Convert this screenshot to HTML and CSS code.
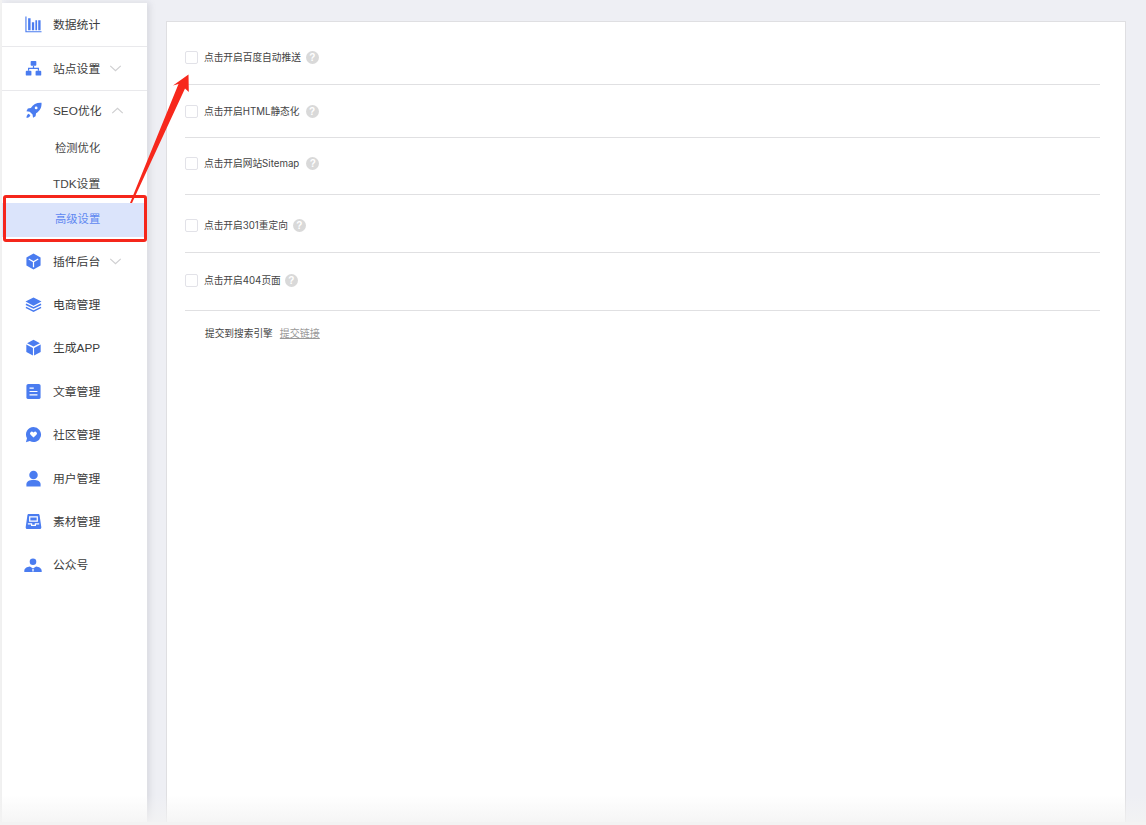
FILE: index.html
```html
<!DOCTYPE html>
<html lang="zh-CN">
<head>
<meta charset="utf-8">
<title>高级设置</title>
<link rel="stylesheet" href="styles.css">
</head>
<body>
<div class="app">
  <nav class="sidebar">
    <a class="nav-item nav-sep">
      <svg class="ico" viewBox="0 0 18 18"><path d="M1 .5v16.200h16.500" fill="none" stroke="#4a7cf0" stroke-width="1.200"/><path d="M3.300 2.500h2.600V15H3.300zM7.300 6.500h2.400V15H7.300zM11 4.500h1.800V15H11zM14 4.500h2.500V15H14z" fill="#4a7cf0"/></svg>
      <span>数据统计</span>
    </a>
    <a class="nav-item nav-sep">
      <svg class="ico" viewBox="0 0 18 18"><rect x="6" y="1" width="6" height="5" rx=".8" fill="#4a7cf0"/><rect x=".8" y="11.500" width="6" height="5" rx="1" fill="#4a7cf0"/><rect x="11.200" y="11.500" width="6" height="5" rx="1" fill="#4a7cf0"/><path d="M9 6v3M3.800 11.500V8.800h10.400v2.700" fill="none" stroke="#4a7cf0" stroke-width="1.300"/></svg>
      <span>站点设置</span>
      <svg class="chev" viewBox="0 0 14 8"><path d="M1 1l6 5.500L13 1" fill="none" stroke="#cfcfd1" stroke-width="1.400"/></svg>
    </a>
    <a class="nav-item nav-open">
      <svg class="ico" viewBox="0 0 18 18"><path d="M17.500.8c-5-.3-8.800 1.500-11.300 5.500L3 7 1.500 9.800 5 10.200l3 3 .5 3.500 2.700-1.700.5-3C15.700 9.500 17.800 6 17.500.8z" fill="#4a7cf0"/><circle cx="11.800" cy="6.300" r="1.500" fill="#fff"/><path d="M4 12.500c-1.500.5-2.300 2-2.500 4.300 2-.2 3.500-1 4.200-2.600z" fill="#4a7cf0"/></svg>
      <span>SEO优化</span>
      <svg class="chev" viewBox="0 0 14 8"><path d="M1 7l6-5.500L13 7" fill="none" stroke="#cfcfd1" stroke-width="1.400"/></svg>
    </a>
    <a class="nav-sub">检测优化</a>
    <a class="nav-sub nav-sub-latin">TDK设置</a>
    <a class="nav-sub nav-sub-active">高级设置</a>
    <a class="nav-item nav-after-sub">
      <svg class="ico" viewBox="0 0 18 18"><path d="M9 .5l7.500 4.300v8.400L9 17.500l-7.500-4.300V4.800z" fill="#4a7cf0"/><path d="M4 6.300L9 9.300l5-3M9 9.300v5.700" fill="none" stroke="#fff" stroke-width="1.300"/></svg>
      <span>插件后台</span>
      <svg class="chev" viewBox="0 0 14 8"><path d="M1 1l6 5.500L13 1" fill="none" stroke="#cfcfd1" stroke-width="1.400"/></svg>
    </a>
    <a class="nav-item">
      <svg class="ico" viewBox="0 0 18 18"><path d="M9 1.500l8.500 4.300L9 10.200.5 5.800z" fill="#4a7cf0"/><path d="M1 8.700l8 4 8-4M1 12l8 4 8-4" fill="none" stroke="#4a7cf0" stroke-width="1.600"/></svg>
      <span>电商管理</span>
    </a>
    <a class="nav-item">
      <svg class="ico" viewBox="0 0 18 18"><path d="M9 .8l6.800 3.600L9 8 2.200 4.400z" fill="#4a7cf0"/><path d="M1.400 5.800l7 3.600v8l-7-3.600zM16.600 5.800l-7 3.600v8l7-3.600z" fill="#4a7cf0"/></svg>
      <span>生成APP</span>
    </a>
    <a class="nav-item">
      <svg class="ico" viewBox="0 0 18 18"><rect x="1.500" y="1" width="15" height="16" rx="2" fill="#4a7cf0"/><path d="M4.800 5.500h4.500M4.800 9h8.400M4.800 12.500h8.400" stroke="#fff" stroke-width="1.300"/></svg>
      <span>文章管理</span>
    </a>
    <a class="nav-item">
      <svg class="ico" viewBox="0 0 18 18"><path d="M9 1a8 8 0 1 1-3.900 15L1 17.300l1.100-4.300A8 8 0 0 1 9 1z" fill="#4a7cf0"/><path d="M9 12.300L5.900 9.200a1.900 1.900 0 0 1 2.700-2.700l.4.400.4-.4a1.900 1.900 0 0 1 2.700 2.700z" fill="#fff"/></svg>
      <span>社区管理</span>
    </a>
    <a class="nav-item">
      <svg class="ico" viewBox="0 0 18 18"><circle cx="9" cy="5.200" r="4.500" fill="#4a7cf0"/><path d="M1.500 17.500v-2.500c0-3 2.800-4.500 7.500-4.500s7.500 1.500 7.500 4.500v2.500z" fill="#4a7cf0"/></svg>
      <span>用户管理</span>
    </a>
    <a class="nav-item">
      <svg class="ico" viewBox="0 0 18 18"><path d="M4 1h10c.8 0 1.300.5 1.400 1.200L17.300 15c0 1.300-.8 2-2 2H2.700c-1.200 0-2-.7-2-2L2.600 2.200C2.700 1.500 3.200 1 4 1z" fill="#4a7cf0"/><path d="M5 4h8v4.500H5z" fill="none" stroke="#fff" stroke-width="1.300"/><path d="M3 11.500h4v1.700h4v-1.700h4" fill="none" stroke="#fff" stroke-width="1.300"/></svg>
      <span>素材管理</span>
    </a>
    <a class="nav-item">
      <svg class="ico ico-wide" viewBox="0 0 18 18"><circle cx="9" cy="5.800" r="3.300" fill="#4a7cf0"/><path d="M.3 16v-1.200c0-2.500 2.800-4 5.600-4.300L9 12.500l3.100-2c2.800.3 5.600 1.800 5.600 4.300V16z" fill="#4a7cf0"/><path d="M9 13v2.500" stroke="#fff" stroke-width="1.300"/></svg>
      <span>公众号</span>
    </a>
  </nav>

  <main class="card">
    <div class="opt opt-1">
      <span class="check"></span><span class="label">点击开启百度自动推送</span><span class="help">?</span>
    </div>
    <div class="opt opt-2">
      <span class="check"></span><span class="label">点击开启HTML静态化</span><span class="help">?</span>
    </div>
    <div class="opt opt-3">
      <span class="check"></span><span class="label">点击开启网站Sitemap</span><span class="help">?</span>
    </div>
    <div class="opt opt-4">
      <span class="check"></span><span class="label">点击开启301重定向</span><span class="help">?</span>
    </div>
    <div class="opt opt-5">
      <span class="check"></span><span class="label">点击开启404页面</span><span class="help">?</span>
    </div>
    <div class="submit">
      <span class="submit-label">提交到搜索引擎</span><a class="submit-link">提交链接</a>
    </div>
  </main>
</div>

<div class="mark-box"></div>
<svg class="mark-arrow" viewBox="0 0 1146 825"><path d="M130 203L178.500 84 173 85.500 188.500 74.500 188.800 92 185 88.500 132 203z" fill="#f7281c"/></svg>
<div class="bottom-fade"></div>
</body>
</html>
```
FILE: styles.css
```css
* { box-sizing: border-box; }
html, body { margin: 0; height: 100%; }
body {
  width: 1146px;
  height: 825px;
  overflow: hidden;
  position: relative;
  background: #eeeff4;
  font-family: "Liberation Sans", "Noto Sans CJK SC", sans-serif;
  color: #333;
}
.app {
  display: flex;
  align-items: flex-start;
  height: 822px;
  padding-top: 3px;
  background: linear-gradient(90deg, #f3f3f3 0 2px, transparent 2px);
}
.sidebar {
  width: 145px;
  height: 819px;
  margin-left: 2px;
  background: #fff;
  flex: none;
  box-shadow: 3px 0 6px rgba(120, 120, 130, .16);
  display: flex;
  flex-direction: column;
}
.nav-item {
  display: flex;
  align-items: center;
  height: 43.4px;
  flex: none;
  padding-left: 23px;
  font-size: 11.800px;
  line-height: 14px;
  color: #3c3c3c;
}
.nav-item span {
  padding-top: 1px;
}
.nav-sep {
  height: 44px;
  border-bottom: 1px solid #e9e9ec;
}
.nav-open { height: 38px; }
.nav-after-sub { margin-top: 2.5px; }
.ico {
  width: 17px;
  height: 17px;
  flex: none;
  margin-right: 11px;
}
.ico-wide {
  width: 18px;
  height: 18px;
  margin-left: -1px;
  margin-right: 11px;
}
.chev {
  width: 13px;
  height: 7px;
  margin-left: 9px;
}
.nav-sub {
  display: block;
  height: 36.5px;
  line-height: 38.5px;
  padding-left: 53px;
  font-size: 11.300px;
  color: #454545;
  flex: none;
}
.nav-sub-latin {
  padding-left: 51px;
  font-size: 11.800px;
  line-height: 37.5px;
}
.nav-sub-active {
  height: 34px;
  line-height: 33px;
  margin-top: 1px;
  background: #dbe4fb;
  color: #5f88f1;
}
.card {
  width: 960px;
  height: 801px;
  margin: 18px 0 0 19px;
  background: #fff;
  border: 1px solid #dfdfe2;
  border-bottom: 0;
  padding: 0 25px 0 18px;
  flex: none;
}
.opt {
  display: flex;
  align-items: center;
  border-bottom: 1px solid #e0e0e2;
}
.opt-1 { height: 63px; padding-top: 8px; }
.opt-2 { height: 53px; }
.opt-3 { height: 57px; padding-bottom: 5px; }
.opt-4 { height: 58px; padding-top: 3px; }
.opt-5 { height: 58px; padding-bottom: 3px; }
.check {
  width: 13px;
  height: 13px;
  border: 1px solid #e2e2e8;
  border-radius: 2px;
  background: #fff;
  flex: none;
  margin-right: 6px;
}
.label {
  font-family: Inter, "Noto Sans CJK SC", sans-serif;
  font-size: 9.700px;
  line-height: 13px;
  color: #444;
}
.help {
  width: 13px;
  height: 13px;
  margin-left: 5px;
  border-radius: 50%;
  background: #d9d9d9;
  color: #fff;
  font-size: 10px;
  font-weight: bold;
  line-height: 13px;
  text-align: center;
  flex: none;
}
.opt-2 .help { margin-left: 6px; }
.opt-3 .help { margin-left: 7px; }
.opt-5 .help { margin-left: 4px; }
.submit {
  display: flex;
  align-items: center;
  height: 44px;
  padding-left: 20px;
}
.submit-label {
  font-size: 9.700px;
  line-height: 13px;
  color: #444;
  margin-right: 7px;
}
.submit-link {
  font-size: 10px;
  line-height: 13px;
  color: #999;
  text-decoration: underline;
}
.mark-box {
  position: absolute;
  left: 3px;
  top: 195px;
  width: 144px;
  height: 47px;
  border: 3px solid #f5261b;
  border-radius: 3px;
}
.mark-arrow {
  position: absolute;
  left: 0;
  top: 0;
  width: 1146px;
  height: 825px;
}
.bottom-fade {
  position: absolute;
  left: 0;
  right: 0;
  bottom: 0;
  height: 30px;
  background: linear-gradient(180deg, rgba(243, 243, 243, 0), rgba(243, 243, 243, .8) 90%, #f3f3f3 90%);
}
```
